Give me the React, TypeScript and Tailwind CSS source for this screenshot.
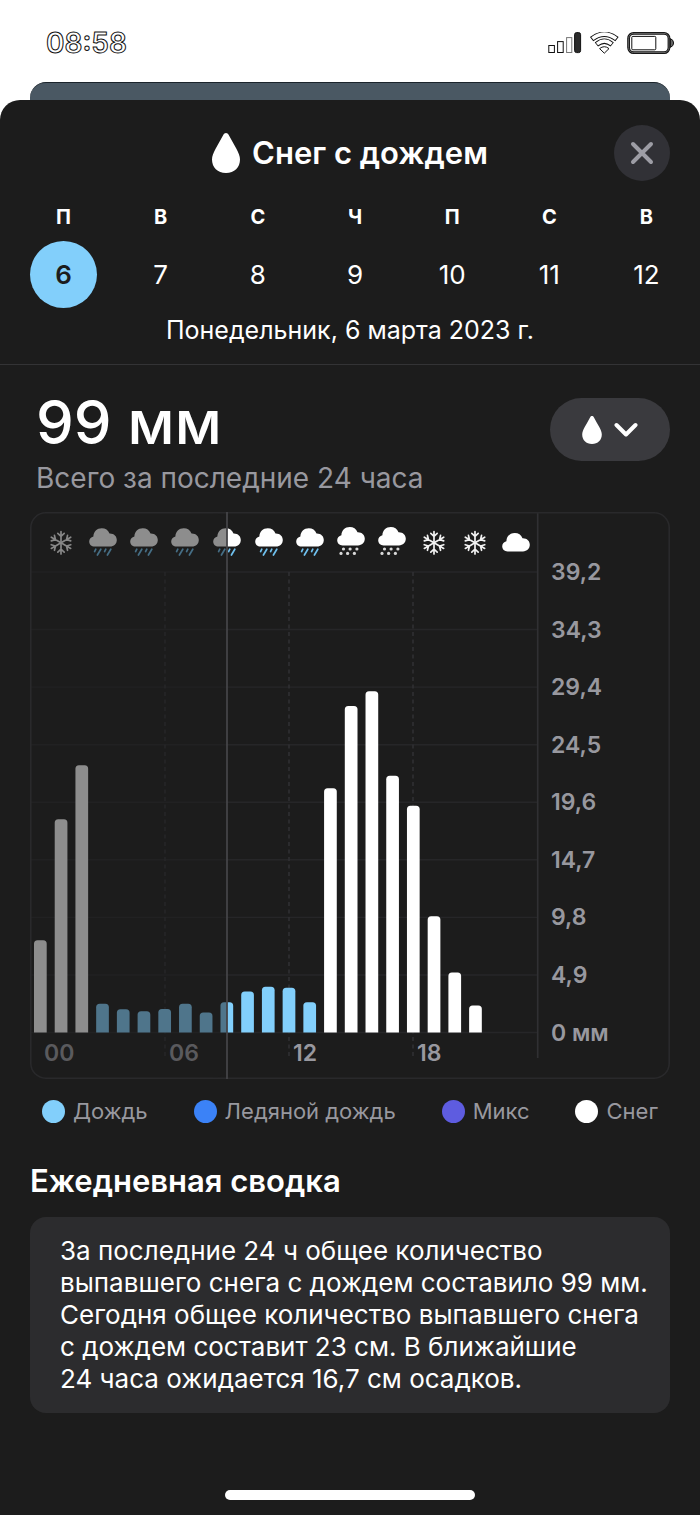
import { useState } from 'react';

type Precip = 'rain' | 'snow';
type Condition = 'flake' | 'rain' | 'snow' | 'cloud';

const days = [
  { letter: 'П', date: 6 },
  { letter: 'В', date: 7 },
  { letter: 'С', date: 8 },
  { letter: 'Ч', date: 9 },
  { letter: 'П', date: 10 },
  { letter: 'С', date: 11 },
  { letter: 'В', date: 12 },
];

const legend = [
  { label: 'Дождь', color: 'bg-[#82cffb]' },
  { label: 'Ледяной дождь', color: 'bg-[#3b82f7]' },
  { label: 'Микс', color: 'bg-[#5e5ce0]' },
  { label: 'Снег', color: 'bg-white' },
];

// mm per hour
const hours: { value: number; type: Precip }[] = [
  { value: 7.85, type: 'snow' },
  { value: 18.15, type: 'snow' },
  { value: 22.75, type: 'snow' },
  { value: 2.45, type: 'rain' },
  { value: 1.98, type: 'rain' },
  { value: 1.8, type: 'rain' },
  { value: 2.0, type: 'rain' },
  { value: 2.45, type: 'rain' },
  { value: 1.7, type: 'rain' },
  { value: 2.58, type: 'rain' },
  { value: 3.5, type: 'rain' },
  { value: 3.9, type: 'rain' },
  { value: 3.8, type: 'rain' },
  { value: 2.58, type: 'rain' },
  { value: 20.8, type: 'snow' },
  { value: 27.8, type: 'snow' },
  { value: 29.05, type: 'snow' },
  { value: 21.85, type: 'snow' },
  { value: 19.3, type: 'snow' },
  { value: 9.9, type: 'snow' },
  { value: 5.1, type: 'snow' },
  { value: 2.3, type: 'snow' },
];

const conditions: { x: number; kind: Condition }[] = [
  { x: 31, kind: 'flake' },
  { x: 73, kind: 'rain' },
  { x: 114, kind: 'rain' },
  { x: 155, kind: 'rain' },
  { x: 197, kind: 'rain' },
  { x: 239, kind: 'rain' },
  { x: 280, kind: 'rain' },
  { x: 321, kind: 'snow' },
  { x: 362, kind: 'snow' },
  { x: 404, kind: 'flake' },
  { x: 445, kind: 'flake' },
  { x: 486, kind: 'cloud' },
];

const axisLabels = ['39,2', '34,3', '29,4', '24,5', '19,6', '14,7', '9,8', '4,9', '0 мм'];
const timeMarks = [
  { x: 10, label: '00' },
  { x: 135, label: '06' },
  { x: 259, label: '12' },
  { x: 383, label: '18' },
];

const BASE_Y = 520.5;
const TOP_Y = 60;
const STEP_X = 20.72;
const NOW_X = 197;

function Drop({ className }: { className: string }) {
  return (
    <svg viewBox="0 0 28 40" className={className} fill="currentColor" aria-hidden="true">
      <path d="M14 0C15.2 0 16 .8 16.6 1.8C19 6.5 22 11.2 24.4 15.8C26.6 20 28 23.2 28 26.6C28 34.6 22.4 40 14 40S0 34.6 0 26.6C0 23.2 1.4 20 3.6 15.8C6 11.2 9 6.5 11.4 1.8C12 .8 12.8 0 14 0Z" />
    </svg>
  );
}

function Cloud() {
  return (
    <path
      d="M5.4 18.4C2.3 18.4 0 16.2 0 13.3C0 10.6 1.8 8.8 4.2 8.2C4.3 3.4 7.8 0 12.6 0C16.2 0 19 1.9 20.3 5.2C24.6 5 27.6 7.9 27.6 11.8C27.6 15.6 24.7 18.4 20.8 18.4Z"
      fill="#fff"
    />
  );
}

function Snowflake() {
  return (
    <g stroke="#f2f2f2" strokeWidth="1.7" strokeLinecap="round" fill="none">
      {[0, 60, 120, 180, 240, 300].map((angle) => (
        <path key={angle} transform={`rotate(${angle})`} d="M0 0V-11.2M-3.2 -9.4L0 -6.4L3.2 -9.4" />
      ))}
    </g>
  );
}

function ConditionIcon({ x, kind }: { x: number; kind: Condition }) {
  if (kind === 'flake') {
    return (
      <g transform={`translate(${x} 30.8)`}>
        <Snowflake />
      </g>
    );
  }
  const top = kind === 'cloud' ? 21 : kind === 'rain' ? 16.2 : 15;
  return (
    <g transform={`translate(${x - 13.8} ${top})`}>
      <Cloud />
      {kind === 'rain' && (
        <path
          d="M6.6 21L5.4 23.4M11.6 21L8.2 26.8M16.6 21L15.4 23.4M21.6 21L18.2 26.8"
          stroke="#6fc0ee"
          strokeWidth="1.7"
          strokeLinecap="round"
        />
      )}
      {kind === 'snow' && (
        <g fill="#d8d8d8">
          <circle cx="6.3" cy="22" r="1.6" />
          <circle cx="12.9" cy="22" r="1.6" />
          <circle cx="19.7" cy="22" r="1.6" />
          <circle cx="3.8" cy="26.4" r="1.6" />
          <circle cx="10.4" cy="26.4" r="1.6" />
          <circle cx="17.2" cy="26.4" r="1.6" />
        </g>
      )}
    </g>
  );
}

function PrecipChart() {
  const gridStep = (BASE_Y - TOP_Y) / 8;

  return (
    <svg viewBox="0 0 640 567" className="block h-auto w-full" role="img" aria-label="График осадков по часам">
      <g stroke="#262628" strokeWidth="1.4" fill="none">
        {axisLabels.map((label, i) => (
          <path key={label} d={`M0 ${TOP_Y + i * gridStep}H507.5`} />
        ))}
        <path d="M507.7 0V546" stroke="#303033" strokeWidth="1.6" />
        {timeMarks.slice(1).map((mark) => (
          <path key={mark.label} d={`M${mark.x} 60V546`} stroke="#303033" strokeWidth="1.6" strokeDasharray="4 3.5" />
        ))}
      </g>

      {conditions.map((c) => (
        <ConditionIcon key={c.x} x={c.x} kind={c.kind} />
      ))}

      {hours.map((hour, i) => {
        const x = 4 + i * STEP_X;
        const y = BASE_Y - (hour.value / 39.2) * (BASE_Y - TOP_Y);
        return (
          <path
            key={i}
            d={`M${x} ${BASE_Y}V${y + 3.5}q0 -3.5 3.5 -3.5h5.7q3.5 0 3.5 3.5V${BASE_Y}Z`}
            fill={hour.type === 'snow' ? '#fff' : '#82cffb'}
          />
        );
      })}

      <g className="font-semibold" fontSize="23" fill="#98989f">
        {timeMarks.map((mark) => (
          <text key={mark.label} x={mark.x + 4} y="549">{mark.label}</text>
        ))}
        {axisLabels.map((label, i) => (
          <text key={label} x="521" y={TOP_Y + i * gridStep + 8}>{label}</text>
        ))}
      </g>

      {/* hours that have already passed are dimmed */}
      <rect x="1" y="1" width={NOW_X - 1} height="565" rx="14" fill="#1c1c1c" fillOpacity="0.5" />
      <rect x="0.8" y="0.8" width="638.4" height="565.4" rx="15" fill="none" stroke="#29292b" strokeWidth="1.6" />
      <path d={`M${NOW_X} 0V567`} stroke="#444448" strokeWidth="1.8" />
    </svg>
  );
}

function StatusBar() {
  return (
    <div className="flex h-[82px] items-center justify-between pt-1 pr-[26px] pl-[46px]">
      <span className="text-[28px] leading-8 font-semibold text-white [-webkit-text-stroke:1px_#111]">08:58</span>
      <svg viewBox="0 0 126 22" className="h-[22px] w-[126px]" fill="none" stroke="#111" aria-hidden="true">
        <rect x="0.8" y="13.5" width="5.6" height="7" strokeWidth="1" />
        <rect x="9.6" y="9.6" width="5.6" height="10.9" strokeWidth="1" />
        <rect x="18.6" y="5.6" width="5.2" height="14.9" strokeWidth="1" stroke="#777" />
        <rect x="26.6" y="0.6" width="6" height="20" rx="2" fill="#2b2b2b" />
        <path d="M43.6 7.2Q56.3 -2.6 69 7.2" strokeWidth="5.4" />
        <path d="M44.4 6.7Q56.3 -2.6 68.2 6.7" stroke="#fff" strokeWidth="3.6" />
        <path d="M48.4 12.4Q56.3 6 64.2 12.4" strokeWidth="5.2" />
        <path d="M49 12Q56.3 6 63.6 12" stroke="#fff" strokeWidth="3.4" />
        <path d="M51.6 16.6Q56.3 12.8 61 16.6L56.3 21.2Z" fill="#fff" strokeLinejoin="round" />
        <rect x="80.6" y="1.4" width="40.4" height="19.2" rx="5" stroke="#111" strokeWidth="2.8" />
        <rect x="80.6" y="1.4" width="40.4" height="19.2" rx="5" stroke="#666" strokeWidth="1" />
        <rect x="83.8" y="4.4" width="24" height="13.4" rx="1" strokeWidth="1" />
        <path d="M122.4 6.6Q125.6 8 125.6 11T122.4 15.4Z" fill="#666" />
      </svg>
    </div>
  );
}

export default function App() {
  const [selected, setSelected] = useState(6);

  return (
    <div className="flex min-h-screen flex-col bg-white font-['Inter','Noto_Sans',sans-serif] text-white">
      <StatusBar />
      <div className="mx-[30px] h-[18px] rounded-t-2xl border-t border-[#1b242b] bg-[#4a5863]" />

      <div className="flex flex-1 flex-col rounded-t-[20px] bg-[#1c1c1c]">
        <header className="border-b border-[#333335] pt-[25px] pb-5">
          <div className="grid grid-cols-[56px_1fr_56px] items-center px-[30px]">
            <h1 className="col-start-2 flex items-center justify-center gap-3 text-[31px] leading-10 font-semibold">
              <Drop className="h-10 w-7" />
              Снег с дождем
            </h1>
            <button
              aria-label="Закрыть"
              className="flex h-14 w-14 items-center justify-center rounded-full bg-[#313136]"
            >
              <svg viewBox="0 0 24 24" className="h-6 w-6" stroke="#9d9da5" strokeWidth="4" strokeLinecap="round" aria-hidden="true">
                <path d="M3 3L21 21M21 3L3 21" />
              </svg>
            </button>
          </div>

          <div className="mt-6 flex justify-between pr-5 pl-[30px]">
            {days.map((day) => (
              <div key={day.date} className="flex w-[67px] flex-col items-center gap-3">
                <span className="text-[20px] leading-6 font-bold">{day.letter}</span>
                <button
                  onClick={() => setSelected(day.date)}
                  className={
                    selected === day.date
                      ? 'h-[67px] w-[67px] rounded-full bg-[#82cffb] text-[26px] font-semibold text-[#1c1c1c]'
                      : 'h-[67px] w-[67px] rounded-full text-[26px]'
                  }
                >
                  {day.date}
                </button>
              </div>
            ))}
          </div>

          <p className="mt-2 text-center text-[25px] leading-7">Понедельник, {selected} марта 2023 г.</p>
        </header>

        <main className="flex flex-1 flex-col px-[30px] pt-[25px]">
          <div className="flex items-start justify-between pl-[6px]">
            <div>
              <p className="text-[60px] leading-16 font-medium">99 мм</p>
              <p className="mt-[6px] text-[28px] leading-9 text-[#98989f]">Всего за последние 24 часа</p>
            </div>
            <button
              aria-label="Выбрать показатель"
              className="mt-2 flex h-[63px] w-[120px] items-center justify-center gap-3 rounded-full bg-[#3a3a3e]"
            >
              <Drop className="h-7 w-5" />
              <svg viewBox="0 0 24 16" className="h-4 w-6" fill="none" stroke="#fff" strokeWidth="4" strokeLinecap="round" strokeLinejoin="round" aria-hidden="true">
                <path d="M2.5 3L12 12.5L21.5 3" />
              </svg>
            </button>
          </div>

          <section className="mt-4">
            <PrecipChart />
            <ul className="mt-[18px] flex justify-between px-3">
              {legend.map((item) => (
                <li key={item.label} className="flex items-center gap-2 text-[22px] leading-7 text-[#98989f]">
                  <span className={`h-[23px] w-[23px] rounded-full ${item.color}`} />
                  {item.label}
                </li>
              ))}
            </ul>
          </section>

          <section className="mt-9">
            <h2 className="text-[31px] leading-10 font-semibold">Ежедневная сводка</h2>
            <p className="mt-4 rounded-2xl bg-[#2c2c2e] py-[18px] pr-5 pl-[30px] text-[26px] leading-8">
              За последние 24 ч общее количество
              <br />
              выпавшего снега с дождем составило 99 мм.
              <br />
              Сегодня общее количество выпавшего снега
              <br />
              с дождем составит 23 см. В ближайшие
              <br />
              24 часа ожидается 16,7 см осадков.
            </p>
          </section>

          <div className="mx-auto mt-auto mb-[15px] h-[10px] w-[250px] rounded-full bg-white" />
        </main>
      </div>
    </div>
  );
}
